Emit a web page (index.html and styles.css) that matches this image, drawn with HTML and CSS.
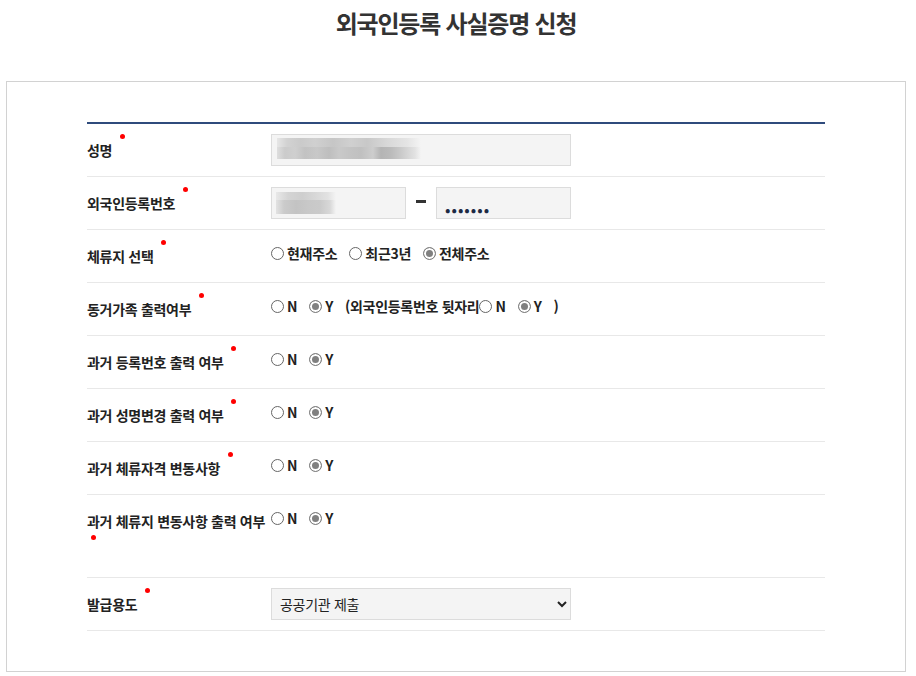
FILE: index.html
```html
<!DOCTYPE html>
<html lang="ko">
<head>
    <meta charset="UTF-8">
    <meta name="viewport" content="width=device-width, initial-scale=1.0">
    <title>외국인등록 사실증명 신청</title>
    <link rel="stylesheet" href="styles.css">
</head>
<body>
    <div class="wrap">
        <h1 class="title">외국인등록 사실증명 신청</h1>

        <div class="box">
            <div class="form">
                <div class="row">
                    <div class="label">성명 <span class="req"></span></div>
                    <div class="field">
                        <input type="text" class="text wide masked-name" readonly>
                    </div>
                </div>

                <div class="row">
                    <div class="label">외국인등록번호 <span class="req"></span></div>
                    <div class="field">
                        <input type="text" class="text half masked-no" readonly>
                        <span class="dash"></span>
                        <input type="password" class="text half pw" value="1234567" readonly>
                    </div>
                </div>

                <div class="row">
                    <div class="label">체류지 선택 <span class="req"></span></div>
                    <div class="field radios">
                        <label class="opt"><input type="radio" name="addr"><span>현재주소</span></label>
                        <label class="opt"><input type="radio" name="addr"><span>최근3년</span></label>
                        <label class="opt"><input type="radio" name="addr" checked><span>전체주소</span></label>
                    </div>
                </div>

                <div class="row">
                    <div class="label">동거가족 출력여부 <span class="req"></span></div>
                    <div class="field radios">
                        <label class="opt"><input type="radio" name="family"><span>N</span></label>
                        <label class="opt"><input type="radio" name="family" checked><span>Y</span></label>
                        <span class="note">(외국인등록번호 뒷자리</span>
                        <label class="opt"><input type="radio" name="familyNo"><span>N</span></label>
                        <label class="opt"><input type="radio" name="familyNo" checked><span>Y</span></label>
                        <span class="note">)</span>
                    </div>
                </div>

                <div class="row">
                    <div class="label">과거 등록번호 출력 여부 <span class="req"></span></div>
                    <div class="field radios">
                        <label class="opt"><input type="radio" name="pastNo"><span>N</span></label>
                        <label class="opt"><input type="radio" name="pastNo" checked><span>Y</span></label>
                    </div>
                </div>

                <div class="row">
                    <div class="label">과거 성명변경 출력 여부 <span class="req"></span></div>
                    <div class="field radios">
                        <label class="opt"><input type="radio" name="pastName"><span>N</span></label>
                        <label class="opt"><input type="radio" name="pastName" checked><span>Y</span></label>
                    </div>
                </div>

                <div class="row">
                    <div class="label">과거 체류자격 변동사항 <span class="req"></span></div>
                    <div class="field radios">
                        <label class="opt"><input type="radio" name="pastStatus"><span>N</span></label>
                        <label class="opt"><input type="radio" name="pastStatus" checked><span>Y</span></label>
                    </div>
                </div>

                <div class="row">
                    <div class="label">과거 체류지 변동사항 출력 여부 <span class="req"></span></div>
                    <div class="field radios">
                        <label class="opt"><input type="radio" name="pastAddr"><span>N</span></label>
                        <label class="opt"><input type="radio" name="pastAddr" checked><span>Y</span></label>
                    </div>
                </div>

                <div class="row">
                    <div class="label">발급용도 <span class="req"></span></div>
                    <div class="field">
                        <select class="select">
                            <option>공공기관 제출</option>
                            <option>개인 보관</option>
                            <option>기타</option>
                        </select>
                    </div>
                </div>
            </div>
        </div>
    </div>
</body>
</html>
```

FILE: styles.css
```css
body {
    margin: 0;
    background-color: #fff;
    font-family: "Noto Sans CJK KR", "Noto Sans", sans-serif;
    color: #222;
}
.wrap {
    width: 900px;
    margin-left: 6px;
}
.title {
    margin: 0 0 40px;
    padding-top: 5px;
    font-size: 24px;
    line-height: 36px;
    letter-spacing: -1.2px;
    text-align: center;
    color: #333;
}
.box {
    border: 1px solid #d2d2d2;
    padding: 40px 80px 40px 80px;
}
.form {
    border-top: 2px solid #2f4b7c;
}
.row {
    display: flex;
    align-items: flex-start;
    border-bottom: 1px solid #e8e8e8;
}
.label {
    width: 184px;
    flex: none;
    padding: 11px 0;
    font-size: 14px;
    font-weight: bold;
    line-height: 30px;
    letter-spacing: -0.3px;
}
.req {
    display: inline-block;
    width: 5px;
    height: 5px;
    margin-left: 4px;
    margin-top: -1px;
    border-radius: 50%;
    background-color: #f00;
    vertical-align: top;
}
.field {
    display: flex;
    align-items: center;
    padding: 10px 0;
}
.text {
    box-sizing: border-box;
    height: 32px;
    border: 1px solid #dcdcdc;
    background-color: #f4f4f4;
    font-family: inherit;
    font-size: 14px;
    color: #222;
    outline: none;
}
.wide {
    width: 300px;
}
.half {
    width: 135px;
}
.masked-name {
    background-image:
        linear-gradient(to right, #dedede 0, #cbcbcb 8px, #cfcfcf 18px, #c2c2c2 28px, #c8c8c8 40px, #bebebe 52px, #c9c9c9 62px, #c4c4c4 72px, #c0c0c0 84px, #cdcdcd 96px, #b4b4b4 104px, #bbbbbb 114px, #cacaca 124px, #e2e2e2 138px, #f4f4f4 144px),
        linear-gradient(to right, #e6e6e6 0, #d2d2d2 10px, #cacaca 24px, #d0d0d0 38px, #c6c6c6 56px, #d0d0d0 74px, #c8c8c8 90px, #d8d8d8 110px, #e4e4e4 130px, #f4f4f4 144px);
    background-size: 144px 12px, 144px 9px;
    background-position: 5px 12px, 5px 3px;
    background-repeat: no-repeat;
}
.masked-no {
    background-image:
        linear-gradient(to right, #e2e2e2 0, #cbcbcb 8px, #c3c3c3 20px, #c8c8c8 32px, #cacaca 44px, #d8d8d8 54px, #f4f4f4 60px),
        linear-gradient(to right, #e8e8e8 0, #d4d4d4 12px, #cecece 26px, #d8d8d8 40px, #e2e2e2 52px, #f4f4f4 60px);
    background-size: 60px 14px, 60px 9px;
    background-position: 4px 12px, 4px 4px;
    background-repeat: no-repeat;
}
.pw {
    padding: 12px 8px 0;
    font-size: 16px;
    letter-spacing: 1px;
    color: #1d2a44;
}
.dash {
    width: 10px;
    height: 3px;
    margin: 0 10px 4px;
    background-color: #333;
}
.radios {
    padding: 8px 0 0;
    height: 30px;
    font-size: 14px;
    font-weight: bold;
    letter-spacing: -0.3px;
}
.opt {
    display: inline-flex;
    align-items: center;
    margin-right: 12px;
    cursor: pointer;
}
.opt input {
    appearance: none;
    box-sizing: border-box;
    width: 13px;
    height: 13px;
    margin: 0 3px 0 0;
    border: 1px solid #666;
    border-radius: 50%;
    background-color: #fff;
}
.opt input:checked {
    border-color: #808080;
    background-color: #808080;
    box-shadow: inset 0 0 0 2px #fff;
}
.note {
    white-space: nowrap;
}
.select {
    box-sizing: border-box;
    width: 300px;
    height: 32px;
    padding: 0 4px;
    border: 1px solid #dcdcdc;
    border-radius: 0;
    background-color: #f4f4f4;
    font-family: inherit;
    font-size: 14px;
    letter-spacing: -0.3px;
    color: #222;
}
```
